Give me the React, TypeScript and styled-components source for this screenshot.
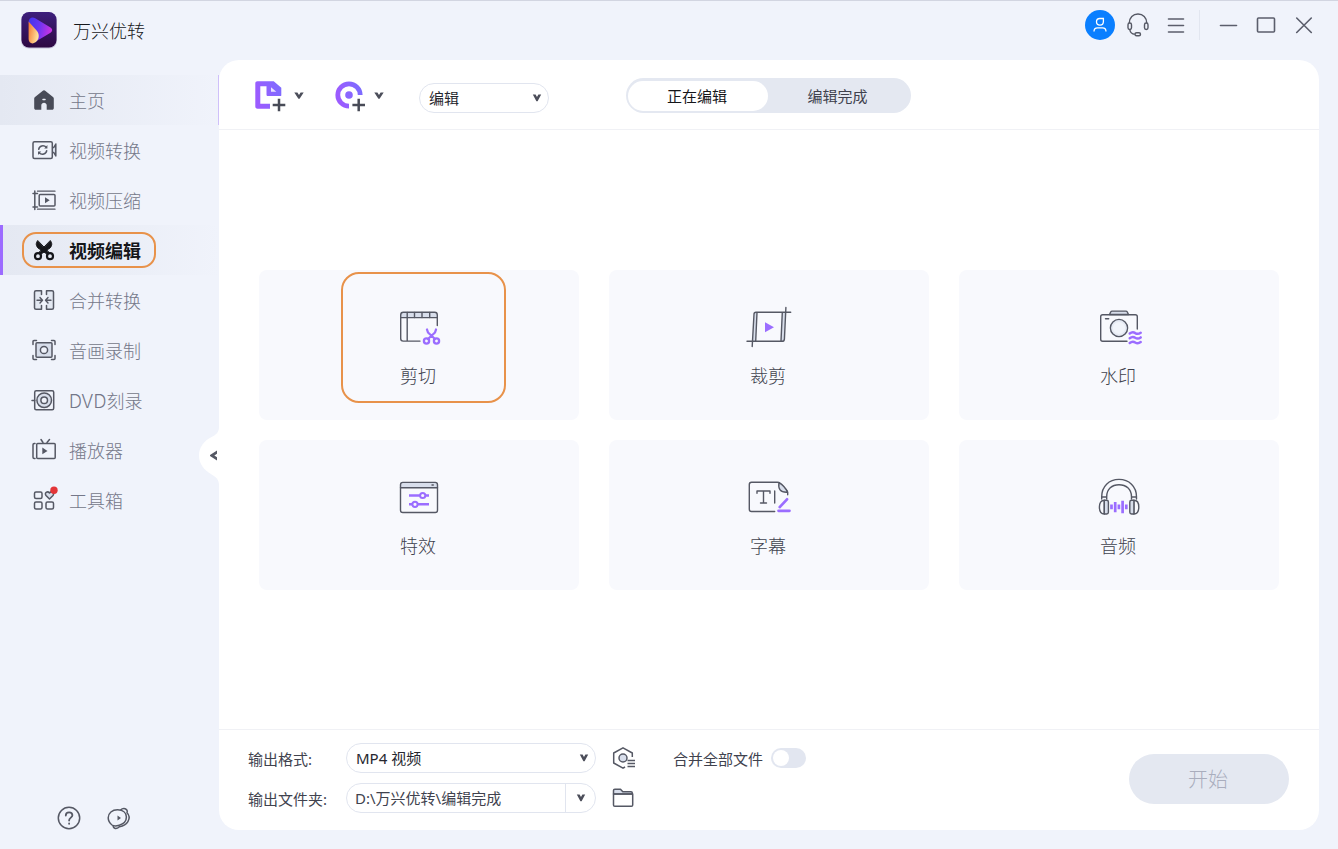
import React from 'react';
import styled, { createGlobalStyle, css } from 'styled-components';

const INK = '#555864';
const VIOLET = '#9b6dff';
const TINT = '#d8deeb';
const ORANGE = '#e8924a';

const GlobalStyle = createGlobalStyle`
  * { box-sizing: border-box; }
  body {
    margin: 0;
    background: #f0f3fb;
    font-family: 'Noto Sans', 'Noto Sans CJK SC', sans-serif;
    font-size: 15px;
    color: #40424e;
  }
  button, input, select { font: inherit; color: inherit; }
  button { border: 0; padding: 0; background: none; cursor: pointer; }
  svg { display: block; flex: none; overflow: visible; }
`;

const Window = styled.div`
  min-height: 100vh;
  display: grid;
  grid-template-columns: 219px minmax(0, 1fr);
  grid-template-rows: 60px 1fr;
  padding: 0 19px 19px 0;
  box-shadow: inset 0 1px 0 #d2d5e1;
`;

const Header = styled.header`
  grid-column: 1 / -1;
  display: flex;
  justify-content: space-between;
  align-items: flex-start;
  margin-right: -4px;
`;

const Brand = styled.div`
  display: flex;
  align-items: center;
  gap: 15px;
  height: 60px;
  padding-left: 20px;
`;

const BrandName = styled.h1`
  margin: 0;
  padding-top: 2px;
  font-size: 18px;
  font-weight: 300;
  line-height: 24px;
  color: #17181c;
`;

const WindowControls = styled.div`
  display: flex;
  align-items: center;
  height: 50px;
`;

const ControlButton = styled.button`
  display: grid;
  place-items: center;
  width: 38px;
  height: 38px;
`;

const ControlDivider = styled.span`
  width: 1px;
  height: 30px;
  margin: 0 9px 0 4px;
  background: #e2e6f0;
`;

const Sidebar = styled.aside`
  display: flex;
  flex-direction: column;
  justify-content: space-between;
  padding-top: 15px;
`;

const Nav = styled.nav`
  display: flex;
  flex-direction: column;
`;

const NavLink = styled.a<{ $state?: 'hover' | 'active' }>`
  position: relative;
  display: flex;
  align-items: center;
  gap: 12px;
  height: 50px;
  padding-left: 31px;
  font-family: Inter, 'Noto Sans CJK SC', sans-serif;
  font-size: 18px;
  font-weight: 300;
  line-height: 24px;
  color: #747789;
  text-decoration: none;
  ${({ $state }) => $state && css`
    background: linear-gradient(90deg, #e4e8f2 0%, #f0f3fb 100%);
  `}
  ${({ $state }) => $state === 'hover' && css`
    border-right: 1px solid #cfc0fa;
  `}
  ${({ $state }) => $state === 'active' && css`
    box-shadow: inset 3px 0 0 #9c6bff;
    font-weight: 700;
    color: #15161a;
  `}
`;

const NavLabel = styled.span`
  padding-top: 3px;
`;

const NavHighlight = styled.span`
  position: absolute;
  left: 22px;
  top: 7px;
  width: 134px;
  height: 36px;
  border: 2px solid ${ORANGE};
  border-radius: 14px;
`;

const SidebarFooter = styled.div`
  display: flex;
  gap: 24px;
  height: 25px;
  padding-left: 56px;
`;

const FooterLink = styled.button`
  width: 26px;
  height: 26px;
`;

const Panel = styled.main`
  position: relative;
  display: flex;
  flex-direction: column;
  background: #fff;
  border-radius: 20px;
`;

const CollapseButton = styled.button`
  position: absolute;
  left: -20px;
  top: 50%;
  margin-top: -18px;
`;

const Toolbar = styled.div`
  display: flex;
  align-items: flex-start;
  height: 70px;
  padding: 18px 35px 0;
  border-bottom: 1px solid #f0f1f5;
`;

const AddButton = styled.button`
  display: flex;
  align-items: center;
  gap: 5px;
  height: 38px;
  margin-right: 29px;
`;

const SelectBox = styled.div<{ $toolbar?: boolean }>`
  position: relative;
  width: ${({ $toolbar }) => ($toolbar ? '130px' : '250px')};
  margin: ${({ $toolbar }) => ($toolbar ? '5px 77px 0 5px' : '0')};
  & > svg {
    position: absolute;
    right: 6px;
    top: 9px;
    pointer-events: none;
  }
`;

const Select = styled.select`
  appearance: none;
  display: block;
  width: 100%;
  height: 30px;
  padding: 0 24px 0 9px;
  border: 1px solid #e1e5ef;
  border-radius: 15px;
  background: #fff;
  color: #26272e;
`;

const Tabs = styled.div`
  display: flex;
  height: 35px;
  padding: 3px 2px 2px;
  border-radius: 18px;
  background: #e4e8f1;
`;

const Tab = styled.button<{ $active?: boolean }>`
  width: ${({ $active }) => ($active ? '140px' : '141px')};
  height: 30px;
  padding: 0 2px 1px 0;
  border-radius: 15px;
  background: ${({ $active }) => ($active ? '#fff' : 'transparent')};
  color: ${({ $active }) => ($active ? '#15161a' : '#40424e')};
`;

const Workspace = styled.section`
  flex: 1;
  display: grid;
  grid-template-columns: repeat(3, minmax(0, 1fr));
  align-content: center;
  gap: 20px 30px;
  padding: 20px 40px;
`;

const Card = styled.button`
  position: relative;
  display: flex;
  flex-direction: column;
  align-items: center;
  gap: 13px;
  height: 150px;
  padding-top: 33px;
  border-radius: 8px;
  background: #f8f9fd;
  font-size: 18px;
  font-weight: 300;
  line-height: 24px;
  color: #40424e;
`;

const CardLabel = styled.span`
  padding-right: 2px;
`;

const CardHighlight = styled.span`
  position: absolute;
  left: 50%;
  top: 2px;
  width: 165px;
  height: 131px;
  margin-left: -78px;
  border: 2px solid ${ORANGE};
  border-radius: 18px;
`;

const Footer = styled.footer`
  display: flex;
  align-items: center;
  justify-content: space-between;
  height: 101px;
  padding: 0 30px 4px 29px;
  border-top: 1px solid #f0f1f5;
`;

const OutputFields = styled.div`
  display: grid;
  grid-template-columns: 98px 250px 56px auto;
  grid-auto-rows: 30px;
  row-gap: 10px;
  align-items: center;
`;

const FieldLabel = styled.label`
  padding-top: 2px;
  line-height: 28px;
`;

const IconButton = styled.button`
  justify-self: center;
`;

const FolderField = styled.div`
  display: flex;
  height: 30px;
  border: 1px solid #e1e5ef;
  border-radius: 15px;
  overflow: hidden;
`;

const FolderInput = styled.input`
  flex: 1;
  min-width: 0;
  border: 0;
  padding: 0 8px 2px;
  background: none;
  outline: none;
`;

const FolderMore = styled.button`
  display: grid;
  place-items: center;
  width: 30px;
  border-left: 1px solid #e1e5ef;
`;

const MergeLabel = styled.label`
  display: flex;
  align-items: center;
  gap: 8px;
  padding-left: 21px;
`;

const Switch = styled.input`
  appearance: none;
  width: 35px;
  height: 20px;
  margin: 0;
  padding: 2px;
  border-radius: 10px;
  background: #e2e6f0;
  &::before {
    content: '';
    display: block;
    width: 16px;
    height: 16px;
    border-radius: 50%;
    background: #fff;
  }
  &:checked { background: ${VIOLET}; }
  &:checked::before { margin-left: auto; }
`;

const StartButton = styled.button`
  width: 160px;
  height: 50px;
  margin-top: 2px;
  padding: 0 2px 2px 0;
  border-radius: 25px;
  background: #e4e8f1;
  font-size: 20px;
  font-weight: 300;
  color: #a9adbd;
`;

const Chevron = ({ wide }: { wide?: boolean }) => (
  <svg width="12" height="12" viewBox="0 0 12 12">
    <path d={wide ? 'M1.300 1.500h3.100L6 4l1.600-2.500h3.100L6.600 7.700H5.400z' : 'M1.800 2.500h2.800L6 5l1.400-2.500h2.800L6.600 9.300H5.400z'} fill="#4c4e5a" />
  </svg>
);

const Logo = () => (
  <svg width="38" height="38" viewBox="0 0 38 38">
    <defs>
      <linearGradient id="logoBack" x1="0" y1="0" x2="0" y2="1">
        <stop offset="0" stopColor="#3d1f7d" />
        <stop offset="1" stopColor="#2e0842" />
      </linearGradient>
      <linearGradient id="logoPlay" x1="0" y1="0" x2="1" y2="0.2">
        <stop offset="0" stopColor="#3f35ee" />
        <stop offset="0.5" stopColor="#6b35f2" />
        <stop offset="1" stopColor="#c632e2" />
      </linearGradient>
      <linearGradient id="logoLeaf" x1="0" y1="0" x2="1" y2="0.4">
        <stop offset="0" stopColor="#f4742f" />
        <stop offset="1" stopColor="#ffe09a" />
      </linearGradient>
    </defs>
    <rect x="1" y="1.500" width="36" height="36" rx="8" fill="#c3bfd8" />
    <rect x="1.500" y="1" width="35" height="35.500" rx="7.500" fill="url(#logoBack)" />
    <path d="M8.600 11.500c0-4.300 3.400-6 6.600-4.300L30.500 16.600c2.300 1.400 2.300 3.800 0 5.200L15 31z" fill="url(#logoPlay)" />
    <path d="M8.600 10.500v17.500c0 4.100 3.800 5.600 6.900 3.300 3.500-2.500 4.500-7.300 1.500-11.300z" fill="url(#logoLeaf)" />
  </svg>
);

const NavSvg = ({ children }: { children: React.ReactNode }) => (
  <svg width="26" height="26" viewBox="0 0 26 26" fill="none" stroke={INK} strokeWidth="1.500" strokeLinecap="round" strokeLinejoin="round">
    {children}
  </svg>
);

const HomeIcon = () => (
  <NavSvg>
    <path d="M11.500 3.900 4 9.900c-.6.5-.8 1-.8 1.700V21c0 1.200.6 1.800 1.800 1.800h5.300v-4.500c0-3.500 5.400-3.500 5.400 0v4.500H21c1.200 0 1.800-.6 1.800-1.800v-9.400c0-.7-.2-1.200-.8-1.700l-7.500-6c-1-.8-2-.8-3 0z" fill="#484b57" stroke="none" />
    <path d="M12 12.500h2" stroke="#eceff7" />
  </NavSvg>
);

const ConvertIcon = () => (
  <NavSvg>
    <rect x="2" y="4.700" width="19.300" height="16.700" rx="1.500" />
    <path d="M22 10.500h.8L24.800 7v12l-2-3.500H22" fill={TINT} />
    <path d="M7.700 12.300c.5-3.500 5-4.800 7.600-2M15.700 13.700c-.5 3.500-5 4.800-7.600 2" />
    <path d="M16.400 8v3.500h-3.200zM7 18v-3.500h3.200z" fill={INK} stroke="none" />
  </NavSvg>
);

const CompressIcon = () => (
  <NavSvg>
    <path d="M3.800 4v18.500M2 6.500h4.500M2 20h4.500" />
    <path d="M6.500 4.200H24M6.500 22.200H24" strokeWidth="1.300" />
    <rect x="8.200" y="7.500" width="15.800" height="11.500" rx="1" />
    <path d="M14 10.200v6l4.700-3z" fill={INK} stroke="none" />
  </NavSvg>
);

const ScissorsIcon = () => (
  <NavSvg>
    <g stroke="#15161a">
      <circle cx="7" cy="19.200" r="3" strokeWidth="2.200" />
      <circle cx="19" cy="19.200" r="3" strokeWidth="2.200" />
      <path d="M6.500 3.800C4.500 6.500 5 8.500 7 11l9.300 6.300 1.200-2z" fill="#15161a" strokeWidth="1" />
      <path d="M19.500 3.800c2 2.700 1.500 4.700-.5 7.200l-9.300 6.300-1.200-2z" fill="#15161a" strokeWidth="1" />
    </g>
  </NavSvg>
);

const MergeIcon = () => (
  <NavSvg>
    <path d="M4 4h6v18H4zM16 4h6v18h-6z" fill="#e3e8f2" stroke="none" />
    <path d="M10.500 7.500V3.700H5c-1 0-1.500.5-1.500 1.500v15.500c0 1 .5 1.500 1.500 1.500h5.500v-3.700M15.500 7.500V3.700H21c1 0 1.500.5 1.500 1.500v15.500c0 1-.5 1.500-1.500 1.500h-5.500v-3.700" />
    <path d="M6 13.200h5M9 10.500l2.500 2.700L9 15.900M20 13.200h-5M17 10.500l-2.500 2.700 2.500 2.700" strokeWidth="1.400" />
  </NavSvg>
);

const RecordIcon = () => (
  <NavSvg>
    <path d="M2 7.500V4.600c0-.7.300-1 1-1h2.500M20.500 3.600H23c.7 0 1 .3 1 1v2.900M2 18.500v2.900c0 .7.300 1 1 1h2.500M20.500 22.400H23c.7 0 1-.3 1-1v-2.900" />
    <rect x="5" y="5.700" width="16" height="14.500" rx="1" fill={TINT} />
    <circle cx="13" cy="13" r="3.600" fill="#f0f3fb" />
  </NavSvg>
);

const DiscIcon = () => (
  <NavSvg>
    <rect x="3.700" y="3.700" width="19" height="19" rx="1.500" />
    <circle cx="13.200" cy="13.200" r="7.300" fill={TINT} />
    <circle cx="13.200" cy="13.200" r="3.300" fill="#f0f3fb" />
    <path d="M1 13.500h2.700" />
  </NavSvg>
);

const PlayerIcon = () => (
  <NavSvg>
    <path d="M10 2.500 12 5.500M18.500 2.500 16 5.500" />
    <path d="M4 6.500h-.8c-.8 0-1.200.4-1.200 1.200v12.600c0 .8.400 1.200 1.200 1.200H4" />
    <rect x="5.700" y="6.500" width="18.500" height="15" rx="1" />
    <path d="M11.300 10.500v6.800l5.200-3.400z" fill={INK} stroke="none" />
  </NavSvg>
);

const ToolboxIcon = () => (
  <NavSvg>
    <rect x="3.500" y="5" width="7.500" height="6.500" rx="1.500" />
    <rect x="3.500" y="15" width="7.500" height="7" rx="1.500" />
    <rect x="15" y="15" width="7.500" height="7" rx="1.500" />
    <path d="M18.500 12 15 8.500c-2-2.500 1.500-5 3.500-2.500 2-2.500 5.500 0 3.500 2.500z" fill={TINT} />
    <circle cx="23" cy="3.200" r="3.700" fill="#e33538" stroke="none" />
  </NavSvg>
);

const CardSvg = ({ children }: { children: React.ReactNode }) => (
  <svg width="48" height="48" viewBox="0 0 48 48" fill="none" stroke={INK} strokeWidth="1.400" strokeLinecap="round" strokeLinejoin="round">
    {children}
  </svg>
);

const CutIcon = () => (
  <CardSvg>
    <path d="M5.700 14.600V12c0-1.700 1-2.700 2.700-2.700h31.200c1.700 0 2.700 1 2.700 2.700v2.600z" fill={TINT} />
    <path d="M42.300 14.500v8M5.700 14.500v21c0 1.700.8 2.600 2.600 2.600H25M12.200 9.500V38M19.500 9.500v5M27 9.500v5M34.700 9.500v5" />
    <g stroke={VIOLET} strokeWidth="2.300">
      <circle cx="31.500" cy="38" r="2.600" />
      <circle cx="41.500" cy="38" r="2.600" />
      <path d="m32 26.500 1 3 7 6.500M41 26.500l-1 3-7 6.500" />
    </g>
  </CardSvg>
);

const CropIcon = () => (
  <CardSvg>
    <path d="M9.500 9.500h2.300L10.500 38.300H7.300zM37.300 9.500h3.200l-1.200 27-1.300 1.800h-2.200z" fill={TINT} stroke="none" />
    <path d="M45.700 9.300H11c-1.300 0-2 .7-2 2L7.200 43.500M2 38.300h35c1.500 0 2.300-.7 2.400-2.200l1.500-31.600M12 9.500l-1.300 28.600M37.300 9.500 36 38" />
    <path d="M20 19.200v10l9-5z" fill={VIOLET} stroke="none" />
  </CardSvg>
);

const WatermarkIcon = () => (
  <CardSvg>
    <path d="M14.500 11.500 15.700 9c.3-.6.700-.9 1.400-.9h13.800c.7 0 1.100.3 1.400.9l1.200 2.500z" fill={TINT} />
    <path d="M42.300 26V13.700c0-1.300-.7-2-2-2H7.700c-1.300 0-2 .7-2 2v22.600c0 1.300.7 2 2 2H32M10.500 15.800h3.200" />
    <circle cx="24" cy="25" r="8.600" fill={TINT} />
    <circle cx="24" cy="25" r="6.800" fill="#f1f4fa" stroke="#e6eaf3" />
    <path d="M34.700 30.500c2-1.500 4-1.500 5.500-.4 1.800 1.100 3.500 1.100 5.500-.4M34.700 35.200c2-1.500 4-1.500 5.500-.4 1.800 1.100 3.500 1.100 5.500-.4M34.700 39.900c2-1.500 4-1.500 5.500-.4 1.800 1.100 3.500 1.100 5.500-.4" stroke={VIOLET} strokeWidth="2.500" />
  </CardSvg>
);

const EffectIcon = () => (
  <CardSvg>
    <path d="M5.500 14.700v-3c0-1.500.8-2.300 2.300-2.300h32.400c1.500 0 2.300.8 2.300 2.300v3z" fill={TINT} />
    <path d="M5.500 14.700v22.500c0 1.500.8 2.300 2.300 2.300h32.400c1.500 0 2.300-.8 2.300-2.300V14.700M37 12h1.300" />
    <g stroke={VIOLET} strokeWidth="2.500" strokeLinecap="butt">
      <path d="M14 22.500h20M14 31.300h20" />
      <circle cx="27.700" cy="22.500" r="2.600" fill="#f8f9fd" strokeWidth="2" />
      <circle cx="20" cy="31.300" r="2.600" fill="#f8f9fd" strokeWidth="2" />
    </g>
  </CardSvg>
);

const SubtitleIcon = () => (
  <CardSvg>
    <path d="M29.700 38.500H6.500c-1.500 0-2.200-.7-2.200-2.200V11.500c0-1.500.7-2.200 2.200-2.200h25.800c1.200 0 2 .3 2.900 1.200l6.300 6.500c.8.800 1.200 1.700 1.200 2.800v1.900" />
    <path d="M34 9.700c-1 6 1 10 8.500 9.500C41 16 38 12 34 9.700z" fill={TINT} />
    <path d="M12 20.300V18h13v2.300M18.500 18v12M15.500 30h6M29.700 18v12" />
    <path d="m42 26.300-7.300 7.800M33.500 37.800h11" stroke={VIOLET} strokeWidth="2.700" />
  </CardSvg>
);

const AudioIcon = () => (
  <CardSvg>
    <path d="M6.700 26v-2.300C6.700 13.500 14 6.400 24 6.400s17.500 7.100 17.500 17.300V26M11.700 26v-2.300C11.700 16 17 11.700 24 11.700s12.500 4.300 12.500 12V26M6.700 24h5M36.500 24h5" />
    <path d="M9.300 27.300C6 27.300 4.400 30 4.400 34s1.600 7 4.900 7zM38.900 27.300c3.300 0 4.900 2.700 4.900 6.700s-1.600 7-4.900 7z" />
    <path d="M9.300 27.300h2.300c1.200 0 1.800.6 1.800 1.700v10.300c0 1.100-.6 1.700-1.800 1.700H9.300zM38.900 27.300h-2.300c-1.200 0-1.800.6-1.800 1.700v10.300c0 1.100.6 1.700 1.800 1.700h2.300z" fill={TINT} />
    <path d="M16.500 31.500v4.800M20.200 29v10.200M23.900 31.500v4.800M27.600 27.800v12.400M31.300 31.500v4.800" stroke={VIOLET} strokeWidth="2.700" strokeLinecap="butt" />
  </CardSvg>
);

const AddFileIcon = () => (
  <svg width="34" height="34" viewBox="0 0 34 34" fill="none">
    <defs>
      <linearGradient id="addTint" x1="0" y1="0.3" x2="1" y2="0">
        <stop offset="0" stopColor="#9b5cff" />
        <stop offset="1" stopColor="#7c6cff" />
      </linearGradient>
    </defs>
    <path d="M3.500 1.300h16.200l7.600 6.500v7.400c0 .6-.3.900-.9.900H14c-1 0-1.500-.5-1.500-1.500V6.300H6.300v17.400H16v5H3.500c-1.400 0-2.200-.8-2.200-2.200v-23c0-1.400.8-2.200 2.200-2.200z" fill="url(#addTint)" />
    <path d="M17 7.300v4.500h5.300z" fill="#e9e2ff" />
    <path d="M25 18.700v12.600M18.700 25h12.600" stroke="#484b57" strokeWidth="2.500" />
  </svg>
);

const AddDiscIcon = () => (
  <svg width="34" height="34" viewBox="0 0 34 34" fill="none">
    <path d="M15 26.200A11.200 11.200 0 1 1 26.200 15" stroke="url(#addTint)" strokeWidth="4.800" />
    <circle cx="15" cy="15" r="3.800" fill="#8a66ff" />
    <path d="M24.700 18.700v12.600M18.400 25H31" stroke="#484b57" strokeWidth="2.500" />
  </svg>
);

const AvatarIcon = () => (
  <svg width="30" height="30" viewBox="0 0 30 30" fill="none" stroke="#fff" strokeWidth="1.300">
    <circle cx="15" cy="15" r="15" fill="#0a7fff" stroke="none" />
    <path d="M14.700 8.500h3.700v3c0 2.300-1.300 3.600-3.400 3.600s-3.500-1.400-3.500-3.300 1.200-3.300 3.200-3.300z" />
    <path d="M9 21.500c0-2.600 1.200-3.700 3.500-3.700h5c2.300 0 3.500 1.100 3.500 3.700" />
  </svg>
);

const HeadsetIcon = () => (
  <svg width="26" height="26" viewBox="0 0 26 26" fill="none" stroke={INK} strokeWidth="1.400">
    <path d="M4.300 11C4.300 5.500 8 2 13 2s8.700 3.500 8.700 9" />
    <rect x="3" y="11" width="3.500" height="6.500" rx="1.700" />
    <rect x="19.500" y="11" width="3.500" height="6.500" rx="1.700" />
    <path d="M4.800 17.500c.4 3 2 4.500 5 4.800" />
    <rect x="10" y="20.700" width="5.500" height="3" rx="1.500" />
  </svg>
);

const LineIcon = ({ d }: { d: string }) => (
  <svg width="24" height="24" viewBox="0 0 24 24" fill="none" stroke="#5b5e6c" strokeWidth="1.600" strokeLinecap="round" strokeLinejoin="round">
    <path d={d} />
  </svg>
);

const HelpIcon = () => (
  <svg width="26" height="26" viewBox="0 0 26 26" fill="none" stroke={INK} strokeWidth="1.500" strokeLinecap="round">
    <circle cx="13" cy="13" r="10.700" />
    <path d="M9.800 10.500c0-2 1.300-3.200 3.300-3.200s3.300 1.100 3.300 2.900c0 2.400-3.300 2.500-3.300 5.300M13.100 18.500v.3" strokeWidth="1.800" />
  </svg>
);

const CommunityIcon = () => (
  <svg width="26" height="26" viewBox="0 0 26 26" fill="none" stroke={INK} strokeWidth="1.500" strokeLinejoin="round">
    <path d="M11.500 4.800c-5.200 0-9.300 3.200-9.300 8 0 3.500 1.800 5.600 3.800 7.200 2 1.500 4.600 1 7.200.3 4.700-1.300 7.200-4.200 7.200-8.200 0-4.600-3.700-7.300-8.900-7.300z" />
    <path d="M14.500 5c2.300-2.200 5-1.900 6.500.2.500.8.300 1.700 0 2.600 2.300 2.300 2.700 5.800.9 8.900-1.700 2.900-4.600 4.400-8.400 5l-1.700 1.100c-2 1.200-4.500.6-4.800-2.200" />
    <path d="M11.500 10.500v5l3.500-2.500z" fill={INK} stroke="none" />
  </svg>
);

const SettingsIcon = () => (
  <svg width="26" height="26" viewBox="0 0 26 26" fill="none" stroke={INK} strokeWidth="1.500" strokeLinejoin="round">
    <path d="M21.300 12V8L12 2.800 2.700 8v10L12 23.200l2-1.200" />
    <circle cx="12" cy="13" r="4" fill={TINT} />
    <path d="M16.500 15.500H24M16.500 18.500H24M16.500 21.500H24" />
  </svg>
);

const FolderIcon = () => (
  <svg width="26" height="26" viewBox="0 0 26 26" fill="none" stroke={INK} strokeWidth="1.500" strokeLinejoin="round">
    <path d="M2.500 9V5.500c0-.9.400-1.300 1.300-1.300h5.700l2.300 2.500H20c.9 0 1.300.4 1.300 1.300v1z" fill={TINT} />
    <path d="M2.500 9h19.200v11c0 .9-.4 1.300-1.300 1.300H3.800c-.9 0-1.300-.4-1.300-1.300z" />
  </svg>
);

const CollapseShape = () => (
  <svg width="20" height="58" viewBox="0 0 20 58">
    <path d="M20 0c0 5-2.500 7.500-7 9.800C4.500 14 0 20.500 0 28.500s4.500 14.500 13 19.200c4.500 2.300 7 5.300 7 10.300z" fill="#fff" />
    <path d="M18 23.500v3.200L15.300 28.500l2.700 1.800v3.200l-7-4.500v-1z" fill={INK} />
  </svg>
);

const navItems: { label: string; icon: React.ReactNode; state?: 'hover' | 'active' }[] = [
  { label: '主页', icon: <HomeIcon />, state: 'hover' },
  { label: '视频转换', icon: <ConvertIcon /> },
  { label: '视频压缩', icon: <CompressIcon /> },
  { label: '视频编辑', icon: <ScissorsIcon />, state: 'active' },
  { label: '合并转换', icon: <MergeIcon /> },
  { label: '音画录制', icon: <RecordIcon /> },
  { label: 'DVD刻录', icon: <DiscIcon /> },
  { label: '播放器', icon: <PlayerIcon /> },
  { label: '工具箱', icon: <ToolboxIcon /> },
];

const cards = [
  { label: '剪切', icon: <CutIcon />, marked: true },
  { label: '裁剪', icon: <CropIcon /> },
  { label: '水印', icon: <WatermarkIcon /> },
  { label: '特效', icon: <EffectIcon /> },
  { label: '字幕', icon: <SubtitleIcon /> },
  { label: '音频', icon: <AudioIcon /> },
];

export default function App() {
  return (
    <>
      <GlobalStyle />
      <Window>
        <Header>
          <Brand>
            <Logo />
            <BrandName>万兴优转</BrandName>
          </Brand>
          <WindowControls>
            <ControlButton aria-label="账户"><AvatarIcon /></ControlButton>
            <ControlButton aria-label="客服"><HeadsetIcon /></ControlButton>
            <ControlButton aria-label="菜单"><LineIcon d="M4.500 6h15M4.500 12.500h15M4.500 19h15" /></ControlButton>
            <ControlDivider />
            <ControlButton aria-label="最小化"><LineIcon d="M4.500 12.500h16" /></ControlButton>
            <ControlButton aria-label="最大化"><LineIcon d="M4.500 5h15c.7 0 1 .3 1 1v12c0 .7-.3 1-1 1h-15c-.7 0-1-.3-1-1V6c0-.7.300-1 1-1z" /></ControlButton>
            <ControlButton aria-label="关闭"><LineIcon d="m4.700 5 14.600 14.500M19.300 5 4.700 19.500" /></ControlButton>
          </WindowControls>
        </Header>

        <Sidebar>
          <Nav>
            {navItems.map((item) => (
              <NavLink key={item.label} href="#" $state={item.state}>
                {item.icon}
                <NavLabel>{item.label}</NavLabel>
                {item.state === 'active' && <NavHighlight />}
              </NavLink>
            ))}
          </Nav>
          <SidebarFooter>
            <FooterLink aria-label="帮助"><HelpIcon /></FooterLink>
            <FooterLink aria-label="社区"><CommunityIcon /></FooterLink>
          </SidebarFooter>
        </Sidebar>

        <Panel>
          <CollapseButton aria-label="收起侧栏"><CollapseShape /></CollapseButton>
          <Toolbar>
            <AddButton aria-label="添加文件"><AddFileIcon /><Chevron wide /></AddButton>
            <AddButton aria-label="添加光盘"><AddDiscIcon /><Chevron wide /></AddButton>
            <SelectBox $toolbar>
              <Select aria-label="模式"><option>编辑</option></Select>
              <Chevron />
            </SelectBox>
            <Tabs>
              <Tab $active>正在编辑</Tab>
              <Tab>编辑完成</Tab>
            </Tabs>
          </Toolbar>

          <Workspace>
            {cards.map((card) => (
              <Card key={card.label}>
                {card.icon}
                <CardLabel>{card.label}</CardLabel>
                {card.marked && <CardHighlight />}
              </Card>
            ))}
          </Workspace>

          <Footer>
            <OutputFields>
              <FieldLabel htmlFor="format">输出格式:</FieldLabel>
              <SelectBox>
                <Select id="format"><option>MP4 视频</option></Select>
                <Chevron />
              </SelectBox>
              <IconButton aria-label="格式设置"><SettingsIcon /></IconButton>
              <MergeLabel>
                合并全部文件
                <Switch type="checkbox" />
              </MergeLabel>
              <FieldLabel htmlFor="folder">输出文件夹:</FieldLabel>
              <FolderField>
                <FolderInput id="folder" defaultValue={'D:\\万兴优转\\编辑完成'} />
                <FolderMore aria-label="选择文件夹"><Chevron /></FolderMore>
              </FolderField>
              <IconButton aria-label="打开文件夹"><FolderIcon /></IconButton>
            </OutputFields>
            <StartButton disabled>开始</StartButton>
          </Footer>
        </Panel>
      </Window>
    </>
  );
}
